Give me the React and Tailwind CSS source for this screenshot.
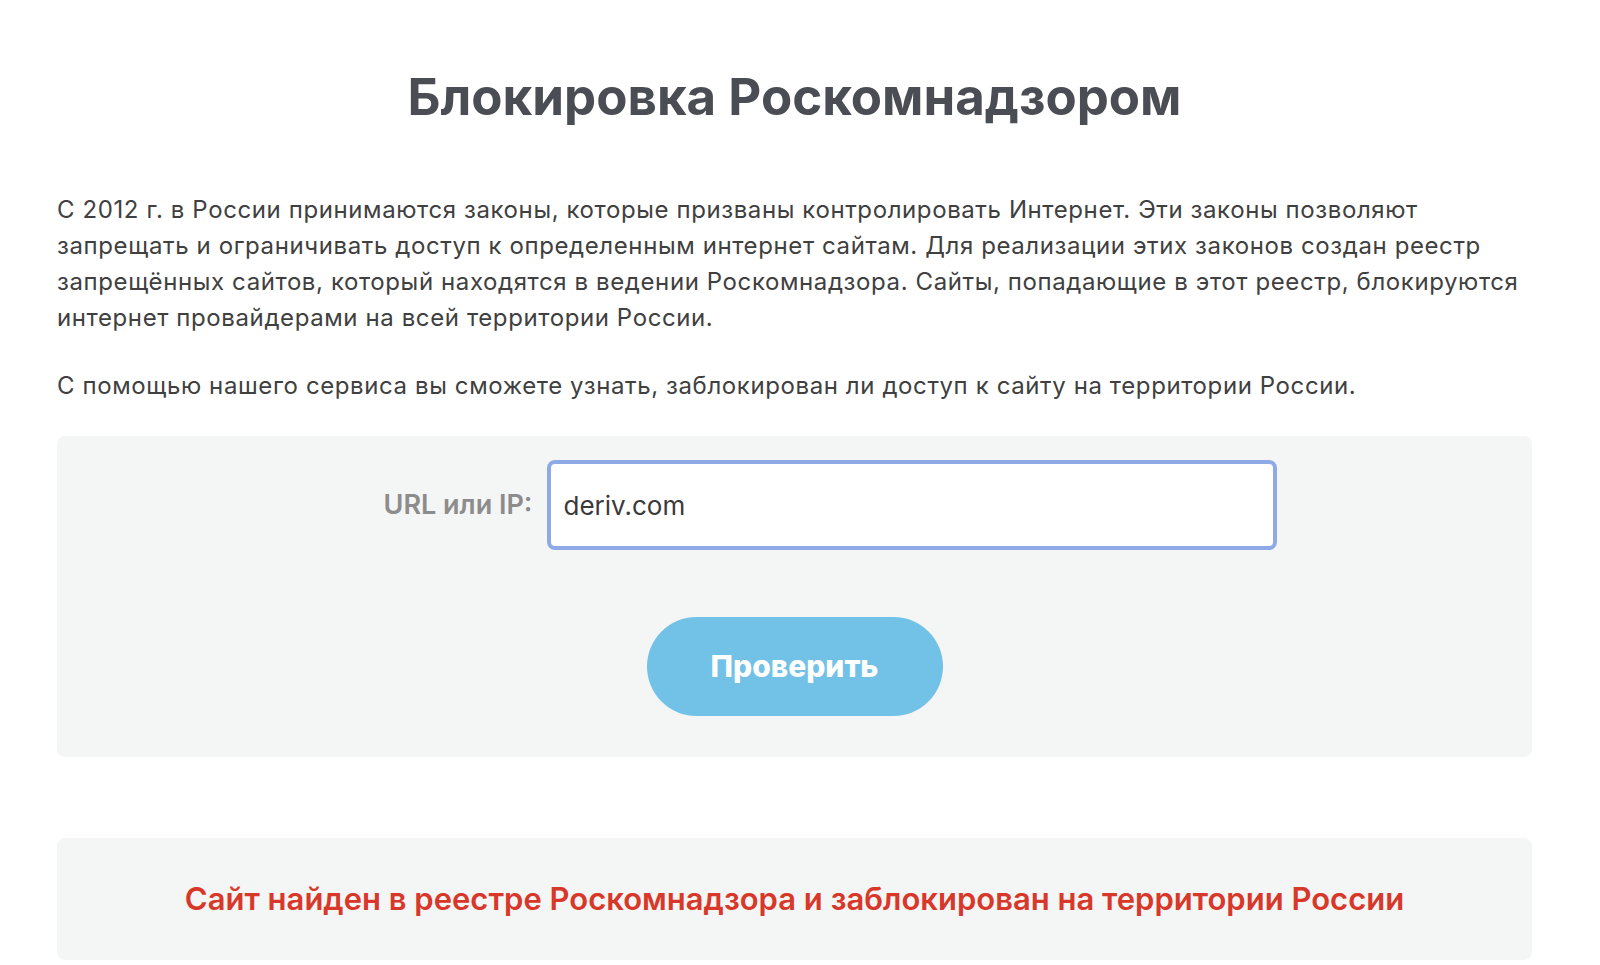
import React, { useState } from 'react';

function App() {
  const [url, setUrl] = useState('deriv.com');

  return (
    <div className="min-h-screen bg-white font-['Inter','Noto_Sans',sans-serif]">
      <div className="ml-[57px] mr-[68px] pt-[68px]">
        <h1 className="text-center text-[51px] leading-[58px] font-bold text-[#4a4e54]">
          Блокировка Роскомнадзором
        </h1>

        <p className="mt-[66px] text-[24px] leading-[36px] tracking-[0.6px] text-[#404040]">
          С 2012 г. в России принимаются законы, которые призваны контролировать Интернет. Эти законы позволяют
          <br />
          запрещать и ограничивать доступ к определенным интернет сайтам. Для реализации этих законов создан реестр
          <br />
          запрещённых сайтов, который находятся в ведении Роскомнадзора. Сайты, попадающие в этот реестр, блокируются
          <br />
          интернет провайдерами на всей территории России.
        </p>

        <p className="mt-[32px] text-[24px] leading-[36px] tracking-[0.6px] text-[#404040]">
          С помощью нашего сервиса вы сможете узнать, заблокирован ли доступ к сайту на территории России.
        </p>

        {/* Form */}
        <div className="mt-[32px] h-[321px] rounded-lg bg-[#f4f5f5] pt-[24px]">
          <div className="flex items-center justify-center pl-[72px]">
            <label className="mr-[15px] text-[27px] font-semibold text-[#8c8c8c]">URL или IP:</label>
            <input
              className="h-[90px] w-[730px] rounded-lg border-4 border-[#8eaae6] bg-white px-[12px] text-[26px] text-[#3a3a3a] outline-none"
              value={url}
              onChange={(e) => setUrl(e.target.value)}
            />
          </div>
          <div className="mt-[67px] flex justify-center">
            <button className="h-[99px] w-[296px] rounded-full bg-[#72c1e7] text-[30px] font-extrabold text-white">
              Проверить
            </button>
          </div>
        </div>

        {/* Result */}
        <div className="mt-[81px] flex h-[122px] items-center justify-center rounded-lg bg-[#f4f5f5]">
          <p className="text-[31px] font-semibold text-[#d8382a]">
            Сайт найден в реестре Роскомнадзора и заблокирован на территории России
          </p>
        </div>
      </div>
    </div>
  );
}

export default App;
